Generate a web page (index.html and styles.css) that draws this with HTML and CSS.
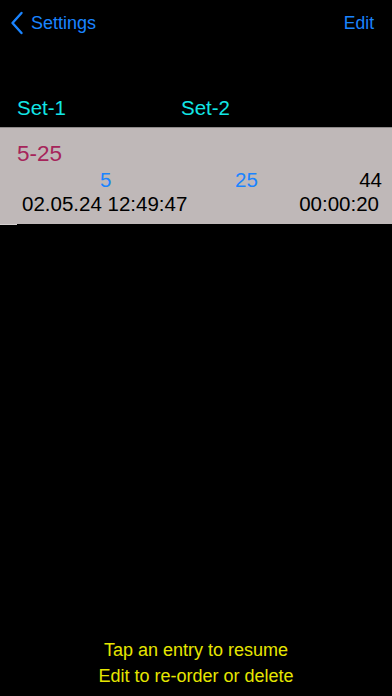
FILE: index.html
```html
<!DOCTYPE html>
<html>
<head>
<meta charset="utf-8">
<link rel="stylesheet" href="styles.css">
</head>
<body>
<div class="screen">
  <div class="navbar">
    <div class="back">
      <svg class="chev" width="14" height="24" viewBox="0 0 14 24"><path d="M11.5 2 L2.5 12 L11.5 22" fill="none" stroke="#1a84ff" stroke-width="2.4" stroke-linecap="round" stroke-linejoin="round"/></svg>
      <span>Settings</span>
    </div>
    <div class="edit">Edit</div>
  </div>
  <div class="headers">
    <span class="h1">Set-1</span>
    <span class="h2">Set-2</span>
  </div>
  <div class="row">
    <div class="title">5-25</div>
    <div class="nums">
      <span class="n1">5</span>
      <span class="n2">25</span>
      <span class="n3">44</span>
    </div>
    <div class="times">
      <span>02.05.24 12:49:47</span>
      <span>00:00:20</span>
    </div>
  </div>
  <div class="sep"></div>
  <div class="spacer"></div>
  <div class="hint">
    <div>Tap an entry to resume</div>
    <div>Edit to re-order or delete</div>
  </div>
</div>
</body>
</html>
```
FILE: styles.css
```css
html, body {
  margin: 0;
  padding: 0;
  background: #000;
}
body {
  font-family: "Liberation Sans", Arial, sans-serif;
}
.screen {
  width: 392px;
  height: 696px;
  display: flex;
  flex-direction: column;
  background: #000;
}
.navbar {
  height: 46px;
  display: flex;
  justify-content: space-between;
  align-items: center;
  padding: 0 18px 0 10px;
  color: #1a84ff;
  font-size: 18px;
}
.back {
  display: flex;
  align-items: center;
  gap: 7px;
}
.chev {
  display: block;
}
.edit { font-size: 17.5px; }
.headers {
  height: 81px;
  display: flex;
  align-items: flex-end;
  padding: 0 0 7px 17px;
  box-sizing: border-box;
  color: #12e6e6;
  font-size: 20.5px;
}
.h1 { width: 164px; }
.row {
  background: #bfb8b8;
  border-top: 1px solid #8e8a8a;
  height: 97px;
  box-sizing: border-box;
  padding: 13px 10px 0 17px;
}
.title {
  color: #a6245a;
  font-size: 22.5px;
  line-height: 26px;
}
.nums {
  position: relative;
  height: 25px;
  font-size: 20.5px;
  line-height: 25px;
}
.nums span { position: absolute; top: 0; }
.n1 { color: #1a84ff; left: 83px; }
.n2 { color: #1a84ff; left: 218px; }
.n3 { color: #000; right: 0; }
.times {
  display: flex;
  justify-content: space-between;
  padding: 0 3px 0 5px;
  font-size: 20.5px;
  line-height: 24px;
  color: #000;
}
.sep {
  width: 17px;
  height: 1px;
  background: #d5d0d0;
}
.spacer { flex: 1; }
.hint {
  color: #e6e600;
  font-size: 18px;
  line-height: 26px;
  text-align: center;
  padding-bottom: 7px;
}
```
